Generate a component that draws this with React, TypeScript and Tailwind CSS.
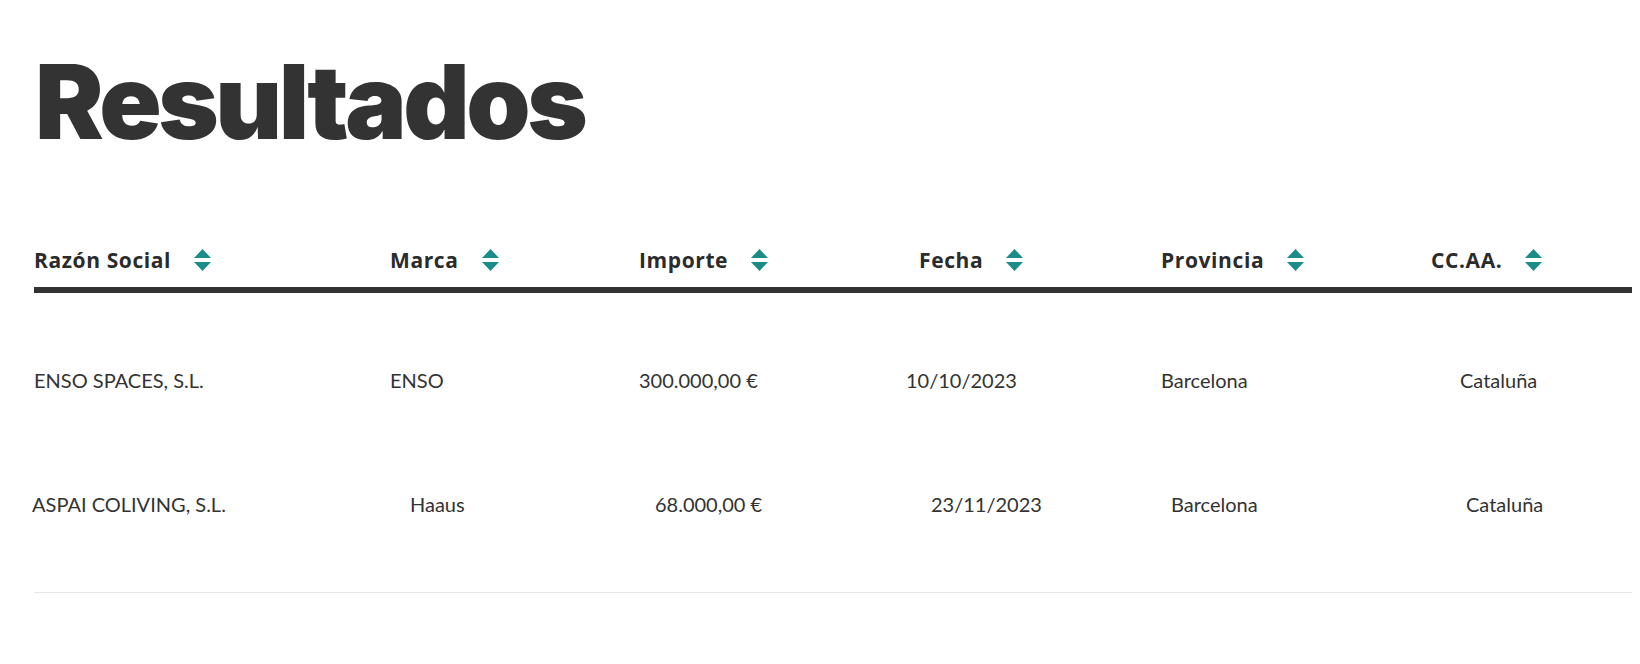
import React from "react";

const SortIcon = () => (
  <svg width="17" height="22" viewBox="0 0 17 22" className="shrink-0">
    <polygon points="0,9 8.5,0 17,9" fill="#1b8c88" />
    <polygon points="0,13 8.5,22 17,13" fill="#1b8c88" />
  </svg>
);

const headers = ["Razón Social", "Marca", "Importe", "Fecha", "Provincia", "CC.AA."];

export default function App() {
  return (
    <div className="min-h-[664px] w-[1640px] bg-white pl-[34px] pr-[8px] pt-[50px]">
      <h1
        className="text-[103px] leading-none font-black tracking-[-3.5px] text-[#333333] ml-[1px]"
        style={{ fontFamily: "Inter, 'Noto Sans', sans-serif" }}
      >
        Resultados
      </h1>

      <div
        className="mt-[93px] grid grid-cols-[356px_249px_280px_242px_270px_1fr] border-b-[6px] border-[#333333] pb-[13px]"
        style={{ fontFamily: "'Open Sans', 'Noto Sans', sans-serif" }}
      >
        {headers.map((h) => (
          <div key={h} className="flex items-center gap-[23px]">
            <span className="text-[21px] leading-[28px] font-bold tracking-[0.6px] text-[#2b2b2b]">{h}</span>
            <SortIcon />
          </div>
        ))}
      </div>

      <div
        className="text-[20px] leading-[24px] text-[#333333]"
        style={{ fontFamily: "Lato, 'Noto Sans', sans-serif" }}
      >
        <div className="grid grid-cols-[356px_249px_280px_242px_270px_1fr] pt-[75px]">
          <div>ENSO SPACES, S.L.</div>
          <div>ENSO</div>
          <div>300.000,00 €</div>
          <div className="-ml-[13px]">10/10/2023</div>
          <div>Barcelona</div>
          <div className="pl-[29px]">Cataluña</div>
        </div>
        <div className="grid grid-cols-[356px_249px_280px_242px_270px_1fr] pt-[100px] pb-[76px] border-b border-[#e6e6e6]">
          <div className="-ml-[2px]">ASPAI COLIVING, S.L.</div>
          <div className="pl-[20px]">Haaus</div>
          <div className="pl-[16px]">68.000,00 €</div>
          <div className="pl-[12px]">23/11/2023</div>
          <div className="pl-[10px]">Barcelona</div>
          <div className="pl-[35px]">Cataluña</div>
        </div>
      </div>
    </div>
  );
}
